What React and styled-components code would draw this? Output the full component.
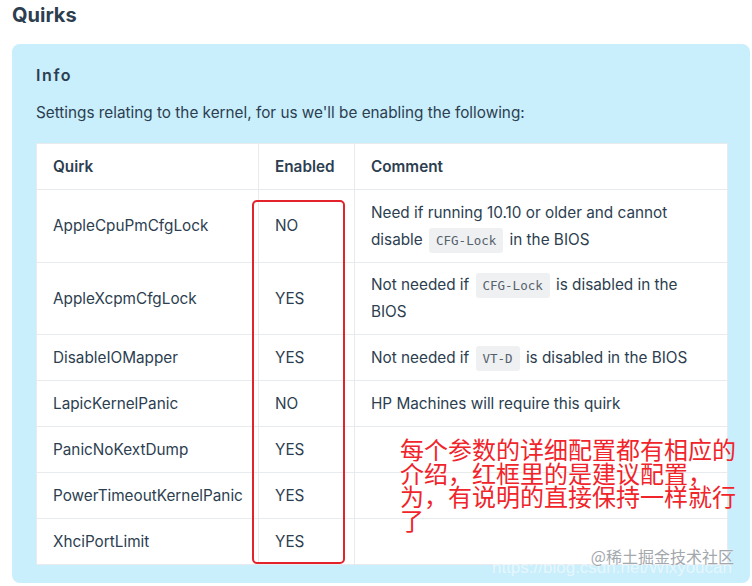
import React from 'react';
import styled, { createGlobalStyle } from 'styled-components';

const GlobalStyle = createGlobalStyle`
  body {
    margin: 0;
    background: #fff;
    font-family: Inter, "Noto Sans", sans-serif;
    color: #2c3e50;
  }
`;

const Page = styled.div`
  width: 752px;
  height: 586px;
  overflow: hidden;
  position: relative;
`;

const Title = styled.h2`
  margin: 0;
  padding-left: 12px;
  font-size: 20px;
  line-height: 30px;
  font-weight: 700;
  color: #2c3e50;
`;

const InfoBox = styled.div`
  margin: 14px 2px 0 12px;
  padding: 19px 23px 18px 24px;
  background: #c9eefc;
  border-radius: 8px;
`;

const Label = styled.div`
  font-size: 16px;
  line-height: 24px;
  font-weight: 600;
  letter-spacing: 1.6px;
  color: #2c3e50;
`;

const Para = styled.p`
  margin: 12px 0 17px;
  font-size: 15.3px;
  line-height: 27px;
  color: #2c3e50;
`;

const TableWrap = styled.div`
  position: relative;
`;

const Table = styled.table`
  width: 691px;
  border-collapse: collapse;
  background: #fff;
  font-size: 15.3px;
  line-height: 27px;
  table-layout: fixed;
`;

const Row = styled.tr`
  height: ${p => (p.tall ? 72.5 : 46)}px;
`;

const Th = styled.th`
  padding: 0 16px;
  border: 1px solid #e8ebee;
  text-align: left;
  font-weight: 600;
  color: #2c3e50;
`;

const Td = styled.td`
  padding: 0 16px;
  border: 1px solid #e8ebee;
  vertical-align: middle;
  color: #2c3e50;
`;

const Code = styled.code`
  font-family: "DejaVu Sans Mono", "Liberation Mono", monospace;
  font-size: 12.5px;
  line-height: 1;
  color: #56616c;
  background: #eef0f2;
  border-radius: 3px;
  padding: 5px 7px;
  margin: 0 2px;
`;

const RedFrame = styled.div`
  position: absolute;
  left: 216px;
  top: 57px;
  width: 89px;
  height: 360px;
  border: 2px solid #e3222b;
  border-radius: 5px;
`;

const Note = styled.div`
  position: absolute;
  left: 364px;
  top: 294px;
  font-family: "Noto Sans CJK SC", sans-serif;
  font-size: 24px;
  line-height: 23.5px;
  color: #f0242a;
  white-space: nowrap;
`;

const Line = styled.span`
  display: block;
`;

const Watermark = styled.div`
  position: absolute;
  right: 18px;
  bottom: 18px;
  font-family: "Noto Sans CJK SC", sans-serif;
  font-size: 16px;
  color: #a3a8ad;
  text-shadow: 0 0 2px #fff;
`;

const FaintUrl = styled.div`
  position: absolute;
  right: 20px;
  bottom: 8px;
  font-family: "Liberation Sans", sans-serif;
  font-size: 17px;
  color: rgba(255, 255, 255, 0.55);
`;

const rows = [
  { q: 'AppleCpuPmCfgLock', e: 'NO', tall: true, c: <>Need if running 10.10 or older and cannot disable <Code>CFG-Lock</Code> in the BIOS</> },
  { q: 'AppleXcpmCfgLock', e: 'YES', tall: true, c: <>Not needed if <Code>CFG-Lock</Code> is disabled in the BIOS</> },
  { q: 'DisableIOMapper', e: 'YES', c: <>Not needed if <Code>VT-D</Code> is disabled in the BIOS</> },
  { q: 'LapicKernelPanic', e: 'NO', c: 'HP Machines will require this quirk' },
  { q: 'PanicNoKextDump', e: 'YES', c: '' },
  { q: 'PowerTimeoutKernelPanic', e: 'YES', c: '' },
  { q: 'XhciPortLimit', e: 'YES', c: '' },
];

export default function App() {
  return (
    <Page>
      <GlobalStyle />
      <Title>Quirks</Title>
      <InfoBox>
        <Label>Info</Label>
        <Para>Settings relating to the kernel, for us we'll be enabling the following:</Para>
        <TableWrap>
          <Table>
            <colgroup>
              <col style={{ width: 222 }} />
              <col style={{ width: 96 }} />
              <col style={{ width: 373 }} />
            </colgroup>
            <thead>
              <Row>
                <Th>Quirk</Th>
                <Th>Enabled</Th>
                <Th>Comment</Th>
              </Row>
            </thead>
            <tbody>
              {rows.map(r => (
                <Row key={r.q} tall={r.tall}>
                  <Td>{r.q}</Td>
                  <Td>{r.e}</Td>
                  <Td>{r.c}</Td>
                </Row>
              ))}
            </tbody>
          </Table>
          <RedFrame />
          <Note>
            <Line>每个参数的详细配置都有相应的</Line>
            <Line>介绍，红框里的是建议配置，</Line>
            <Line>为，有说明的直接保持一样就行</Line>
            <Line>了</Line>
          </Note>
        </TableWrap>
      </InfoBox>
      <FaintUrl>https://blog.csdn.net/Wixyoucan</FaintUrl>
      <Watermark>@稀土掘金技术社区</Watermark>
    </Page>
  );
}
